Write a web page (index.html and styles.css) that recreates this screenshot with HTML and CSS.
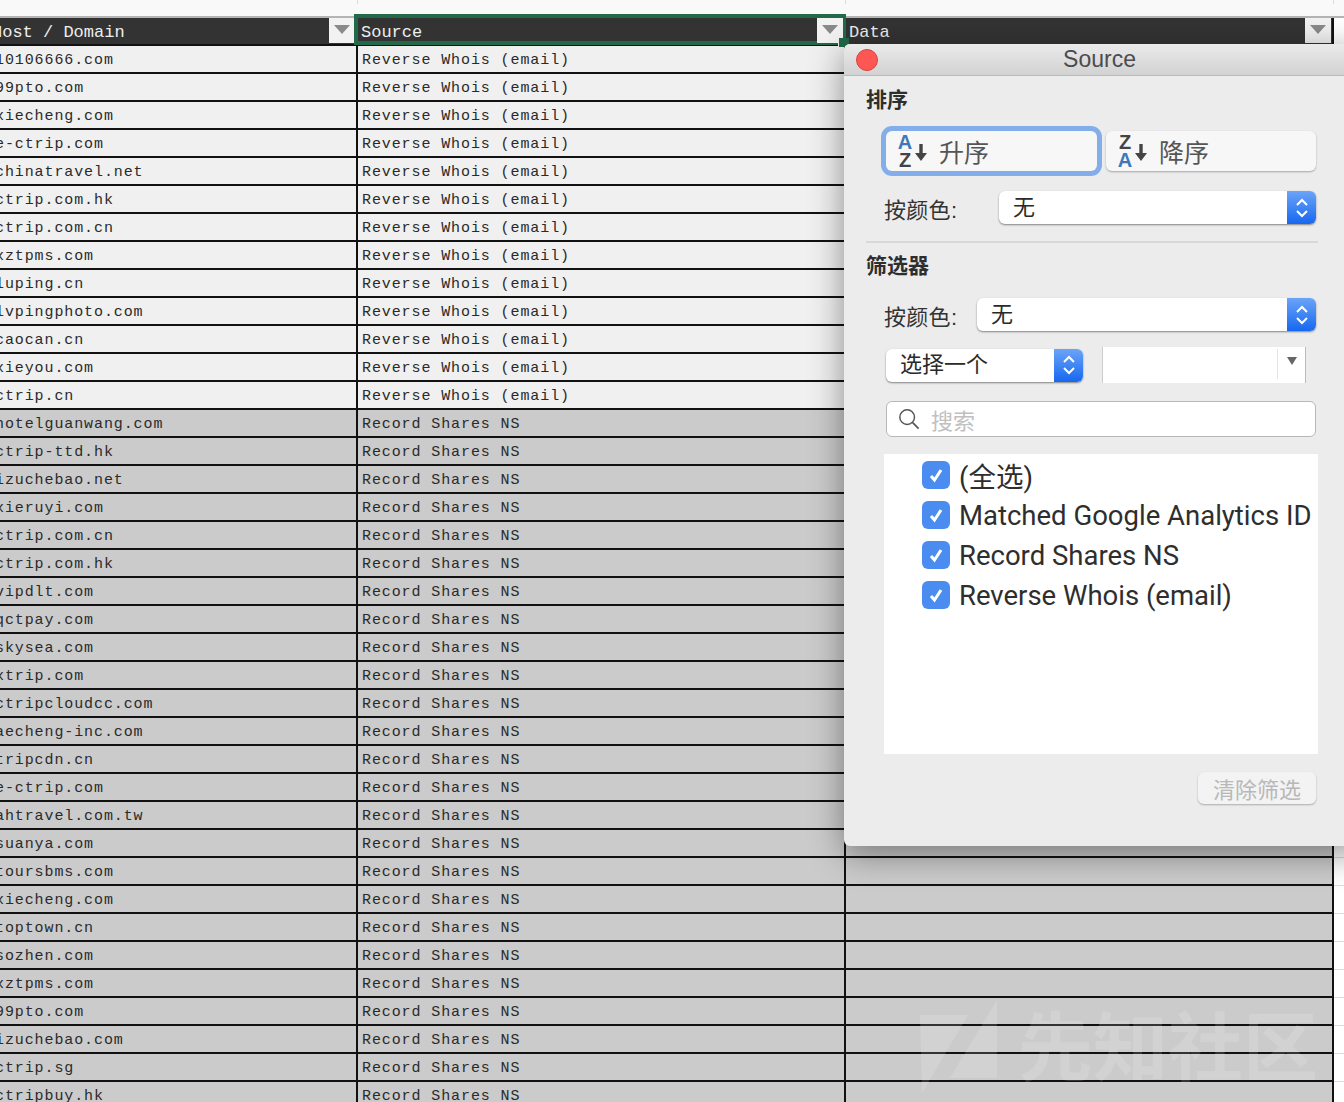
FILE: index.html
```html
<!DOCTYPE html>
<html>
<head>
    <title>Source filter</title>
    <link rel="stylesheet" href="styles.css">
</head>
<body>
    <div class="sheet">
        <div class="col-letters">
            <div class="col-letter col-a">A</div>
            <div class="col-letter col-b">B</div>
            <div class="col-letter col-c">C</div>
        </div>

        <table class="grid">
            <colgroup>
                <col class="w-a"><col class="w-b"><col class="w-c"><col class="w-d">
            </colgroup>
            <thead>
                <tr>
                    <th class="first"><div class="head-cell"><span>Host / Domain</span><span class="filter-btn"></span></div></th>
                    <th class="selected"><div class="head-cell"><span>Source</span><span class="filter-btn"></span></div><span class="fill-handle"></span></th>
                    <th><div class="head-cell"><span>Data</span><span class="filter-btn"></span></div></th>
                    <td class="blank"></td>
                </tr>
            </thead>
            <tbody>
                <tr><td class="first">10106666.com</td><td>Reverse Whois (email)</td><td></td><td class="blank"></td></tr>
                <tr><td class="first">99pto.com</td><td>Reverse Whois (email)</td><td></td><td class="blank"></td></tr>
                <tr><td class="first">xiecheng.com</td><td>Reverse Whois (email)</td><td></td><td class="blank"></td></tr>
                <tr><td class="first">e-ctrip.com</td><td>Reverse Whois (email)</td><td></td><td class="blank"></td></tr>
                <tr><td class="first">chinatravel.net</td><td>Reverse Whois (email)</td><td></td><td class="blank"></td></tr>
                <tr><td class="first">ctrip.com.hk</td><td>Reverse Whois (email)</td><td></td><td class="blank"></td></tr>
                <tr><td class="first">ctrip.com.cn</td><td>Reverse Whois (email)</td><td></td><td class="blank"></td></tr>
                <tr><td class="first">xztpms.com</td><td>Reverse Whois (email)</td><td></td><td class="blank"></td></tr>
                <tr><td class="first">luping.cn</td><td>Reverse Whois (email)</td><td></td><td class="blank"></td></tr>
                <tr><td class="first">lvpingphoto.com</td><td>Reverse Whois (email)</td><td></td><td class="blank"></td></tr>
                <tr><td class="first">caocan.cn</td><td>Reverse Whois (email)</td><td></td><td class="blank"></td></tr>
                <tr><td class="first">xieyou.com</td><td>Reverse Whois (email)</td><td></td><td class="blank"></td></tr>
                <tr><td class="first">ctrip.cn</td><td>Reverse Whois (email)</td><td></td><td class="blank"></td></tr>
                <tr class="grey"><td class="first">hotelguanwang.com</td><td>Record Shares NS</td><td></td><td class="blank"></td></tr>
                <tr class="grey"><td class="first">ctrip-ttd.hk</td><td>Record Shares NS</td><td></td><td class="blank"></td></tr>
                <tr class="grey"><td class="first">izuchebao.net</td><td>Record Shares NS</td><td></td><td class="blank"></td></tr>
                <tr class="grey"><td class="first">xieruyi.com</td><td>Record Shares NS</td><td></td><td class="blank"></td></tr>
                <tr class="grey"><td class="first">ctrip.com.cn</td><td>Record Shares NS</td><td></td><td class="blank"></td></tr>
                <tr class="grey"><td class="first">ctrip.com.hk</td><td>Record Shares NS</td><td></td><td class="blank"></td></tr>
                <tr class="grey"><td class="first">vipdlt.com</td><td>Record Shares NS</td><td></td><td class="blank"></td></tr>
                <tr class="grey"><td class="first">qctpay.com</td><td>Record Shares NS</td><td></td><td class="blank"></td></tr>
                <tr class="grey"><td class="first">skysea.com</td><td>Record Shares NS</td><td></td><td class="blank"></td></tr>
                <tr class="grey"><td class="first">xtrip.com</td><td>Record Shares NS</td><td></td><td class="blank"></td></tr>
                <tr class="grey"><td class="first">ctripcloudcc.com</td><td>Record Shares NS</td><td></td><td class="blank"></td></tr>
                <tr class="grey"><td class="first">aecheng-inc.com</td><td>Record Shares NS</td><td></td><td class="blank"></td></tr>
                <tr class="grey"><td class="first">tripcdn.cn</td><td>Record Shares NS</td><td></td><td class="blank"></td></tr>
                <tr class="grey"><td class="first">e-ctrip.com</td><td>Record Shares NS</td><td></td><td class="blank"></td></tr>
                <tr class="grey"><td class="first">ahtravel.com.tw</td><td>Record Shares NS</td><td></td><td class="blank"></td></tr>
                <tr class="grey"><td class="first">suanya.com</td><td>Record Shares NS</td><td></td><td class="blank"></td></tr>
                <tr class="grey"><td class="first">toursbms.com</td><td>Record Shares NS</td><td></td><td class="blank"></td></tr>
                <tr class="grey"><td class="first">xiecheng.com</td><td>Record Shares NS</td><td></td><td class="blank"></td></tr>
                <tr class="grey"><td class="first">toptown.cn</td><td>Record Shares NS</td><td></td><td class="blank"></td></tr>
                <tr class="grey"><td class="first">sozhen.com</td><td>Record Shares NS</td><td></td><td class="blank"></td></tr>
                <tr class="grey"><td class="first">xztpms.com</td><td>Record Shares NS</td><td></td><td class="blank"></td></tr>
                <tr class="grey"><td class="first">99pto.com</td><td>Record Shares NS</td><td></td><td class="blank"></td></tr>
                <tr class="grey"><td class="first">izuchebao.com</td><td>Record Shares NS</td><td></td><td class="blank"></td></tr>
                <tr class="grey"><td class="first">ctrip.sg</td><td>Record Shares NS</td><td></td><td class="blank"></td></tr>
                <tr class="grey"><td class="first">ctripbuy.hk</td><td>Record Shares NS</td><td></td><td class="blank"></td></tr>
            </tbody>
        </table>

        <div class="panel">
            <div class="title-bar">
                <span class="close-dot"></span>
                <span class="title">Source</span>
            </div>
            <div class="panel-body">
                <h2 class="section-title">排序</h2>
                <div class="sort-row">
                    <button class="sort-btn focused">
                        <span class="az"><b class="blue">A</b><b>Z</b></span>
                        <svg class="arrow" width="14" height="18" viewBox="0 0 14 18"><path d="M7 0v10" stroke="#444" stroke-width="3.400" fill="none"/><path d="M1 9h12l-6 8z" fill="#444"/></svg>
                        <span class="sort-label">升序</span>
                    </button>
                    <button class="sort-btn">
                        <span class="az"><b>Z</b><b class="blue">A</b></span>
                        <svg class="arrow" width="14" height="18" viewBox="0 0 14 18"><path d="M7 0v10" stroke="#444" stroke-width="3.400" fill="none"/><path d="M1 9h12l-6 8z" fill="#444"/></svg>
                        <span class="sort-label">降序</span>
                    </button>
                </div>
                <div class="color-row sort-color">
                    <span class="field-label">按颜色:</span>
                    <div class="select grow">
                        <span class="select-text">无</span>
                        <span class="stepper"><svg width="14" height="24" viewBox="0 0 14 24"><path d="M2 9l5-5 5 5M2 15l5 5 5-5" stroke="#fff" stroke-width="2" fill="none"/></svg></span>
                    </div>
                </div>
                <div class="divider"></div>
                <h2 class="section-title filter-title">筛选器</h2>
                <div class="color-row filter-color">
                    <span class="field-label">按颜色:</span>
                    <div class="select grow">
                        <span class="select-text">无</span>
                        <span class="stepper"><svg width="14" height="24" viewBox="0 0 14 24"><path d="M2 9l5-5 5 5M2 15l5 5 5-5" stroke="#fff" stroke-width="2" fill="none"/></svg></span>
                    </div>
                </div>
                <div class="condition-row">
                    <div class="select condition">
                        <span class="select-text">选择一个</span>
                        <span class="stepper"><svg width="14" height="24" viewBox="0 0 14 24"><path d="M2 9l5-5 5 5M2 15l5 5 5-5" stroke="#fff" stroke-width="2" fill="none"/></svg></span>
                    </div>
                    <div class="combo"><span class="combo-arrow"></span></div>
                </div>
                <div class="search">
                    <svg width="22" height="22" viewBox="0 0 24 24"><circle cx="10" cy="10" r="8" stroke="#555" stroke-width="1.600" fill="none"/><path d="M16 16l6.500 6.500" stroke="#555" stroke-width="1.800" fill="none"/></svg>
                    <span class="search-text">搜索</span>
                </div>
                <ul class="check-list">
                    <li><span class="check"><svg width="18" height="18" viewBox="0 0 18 18"><path d="M4 10l3.500 4L14 4" stroke="#fff" stroke-width="3" fill="none"/></svg></span>(全选)</li>
                    <li><span class="check"><svg width="18" height="18" viewBox="0 0 18 18"><path d="M4 10l3.500 4L14 4" stroke="#fff" stroke-width="3" fill="none"/></svg></span>Matched Google Analytics ID</li>
                    <li><span class="check"><svg width="18" height="18" viewBox="0 0 18 18"><path d="M4 10l3.500 4L14 4" stroke="#fff" stroke-width="3" fill="none"/></svg></span>Record Shares NS</li>
                    <li><span class="check"><svg width="18" height="18" viewBox="0 0 18 18"><path d="M4 10l3.500 4L14 4" stroke="#fff" stroke-width="3" fill="none"/></svg></span>Reverse Whois (email)</li>
                </ul>
                <div class="clear-row"><button class="clear-btn">清除筛选</button></div>
            </div>
        </div>

        <div class="watermark">
            <svg class="wm-logo" width="78" height="94" viewBox="0 0 78 94"><path d="M0 15h48L2 93zM77 0v78H30z" fill="#fff"/></svg>
            <span class="wm-text">先知社区</span>
        </div>
    </div>
</body>
</html>
```

FILE: styles.css
```css
* {
    box-sizing: border-box;
}

body {
    margin: 0;
    background-color: #fff;
    font-family: "Liberation Sans", "Noto Sans CJK SC", sans-serif;
}

.sheet {
    position: relative;
    width: 1344px;
    height: 1102px;
    overflow: hidden;
}

/* column letters, cut off by the top of the window */
.col-letters {
    display: grid;
    grid-template-columns: 358px 488px 488px 10px;
    height: 16px;
    overflow: hidden;
    background-color: #f9f9f9;
}

.col-letter {
    height: 16px;
    margin-top: -12px;
    border-right: 1px solid #ddd;
    font-family: "Liberation Mono", monospace;
    font-size: 15px;
    line-height: 16px;
    text-align: center;
    color: #777;
}

.col-a { padding-right: 12px; }
.col-b { color: #1f7a4c; }

/* the sheet */
.grid {
    table-layout: fixed;
    width: 1344px;
    border-collapse: separate;
    border-spacing: 0;
    border-top: 2px solid #b4b4b4;
    font-family: "Liberation Mono", monospace;
    font-size: 15px;
    letter-spacing: 0.9px;
}

.w-a { width: 358px; }
.w-b { width: 488px; }
.w-c { width: 488px; }
.w-d { width: 10px; }

.grid th,
.grid td {
    height: 28px;
    padding: 3px 0 0 4px;
    border-right: 2px solid #111;
    border-bottom: 2px solid #111;
    white-space: nowrap;
    overflow: hidden;
    text-align: left;
    font-weight: normal;
    line-height: 22px;
    color: #2a2a2a;
    background-color: #f0f0f0;
}

.grid tr.grey td {
    background-color: #cbcbcb;
}

.grid td.first,
.grid th.first {
    padding-left: 0;
    text-indent: -5px;
}

.grid td.blank {
    padding: 0;
    border-right: none;
    border-bottom: 1px solid #dcdcdc;
    background-color: #fff !important;
}

.grid th {
    position: relative;
    padding: 0 1px 0 3px;
    font-size: 17px;
    letter-spacing: 0;
    color: #eee;
    background-color: #333;
    overflow: visible;
}

.grid th.first {
    padding-left: 0;
    text-indent: -8px;
}

.head-cell {
    display: flex;
    justify-content: space-between;
    align-items: flex-start;
    height: 26px;
    overflow: hidden;
    line-height: 30px;
}

.filter-btn {
    position: relative;
    flex: none;
    width: 26px;
    height: 25px;
    background-color: #f2f2f2;
    text-indent: 0;
}

.filter-btn::after {
    content: "";
    position: absolute;
    left: 5px;
    top: 7px;
    border-left: 8px solid transparent;
    border-right: 8px solid transparent;
    border-top: 9px solid #8a8a8a;
}

/* green selection box round the Source header */
.grid th.selected {
    z-index: 2;
}

.grid th.selected::before {
    content: "";
    position: absolute;
    left: -4px;
    top: -4px;
    right: -2px;
    bottom: -1px;
    border: 4px solid #22694a;
    pointer-events: none;
}

.fill-handle {
    position: absolute;
    right: -5px;
    bottom: -3px;
    width: 11px;
    height: 9px;
    border-left: 1px solid #f2f2f2;
    background-color: #22694a;
}

/* filter panel lying over the sheet */
.panel {
    position: absolute;
    left: 844px;
    top: 44px;
    width: 520px;
    height: 802px;
    border-radius: 6px;
    background-color: #ececec;
    box-shadow: 0 8px 34px rgba(0, 0, 0, 0.42);
    z-index: 3;
}

.title-bar {
    display: flex;
    align-items: center;
    justify-content: center;
    position: relative;
    height: 32px;
    width: 500px;
    border-radius: 6px 0 0 0;
    border-bottom: 1px solid #b9b9b9;
    background: linear-gradient(#eaeaea, #d2d2d2);
}

.close-dot {
    position: absolute;
    left: 12px;
    top: 5px;
    width: 22px;
    height: 22px;
    border-radius: 50%;
    border: 1px solid #d8443f;
    background-color: #fc5753;
}

.title {
    margin-left: 11px;
    font-size: 23px;
    color: #4c4c4c;
}

.panel-body {
    width: 500px;
    padding: 0 28px 0 22px;
}

.section-title {
    margin: 0;
    font-size: 21px;
    font-weight: bold;
    line-height: 30px;
    color: #2e2e2e;
}

.panel-body > .section-title:first-child {
    margin-top: 9px;
}

.sort-row {
    display: flex;
    gap: 9px;
    margin: 16px 0 0 20px;
}

.sort-btn {
    display: flex;
    align-items: center;
    height: 40px;
    width: 210px;
    padding: 0 0 0 10px;
    border: none;
    border-radius: 6px;
    background-color: #f7f7f7;
    box-shadow: 0 1px 2px rgba(0, 0, 0, 0.3);
    font-family: inherit;
}

.sort-btn.focused {
    width: 211px;
    box-shadow: 0 0 0 5px #83aeea;
}

.az {
    display: flex;
    flex-direction: column;
    width: 18px;
    font-size: 20px;
    line-height: 18px;
    color: #444;
}

.az b.blue {
    color: #3e78b8;
}

.arrow {
    margin: 4px 0 0 0;
}

.sort-label {
    margin-left: 11px;
    font-size: 25px;
    color: #555;
}

.color-row {
    display: flex;
    align-items: center;
    margin-left: 18px;
}

.sort-color {
    margin-top: 20px;
}

.field-label {
    width: 93px;
    flex: none;
    font-size: 22px;
    letter-spacing: 0.3px;
    color: #333;
}

.select {
    display: flex;
    align-items: center;
    justify-content: space-between;
    height: 33px;
    border-radius: 6px;
    background-color: #fff;
    box-shadow: 0 1px 2px rgba(0, 0, 0, 0.45);
}

.grow {
    flex: 1;
}

.sort-color .grow {
    margin-left: 22px;
}

.select-text {
    padding-left: 14px;
    font-size: 22px;
    line-height: 30px;
    color: #2a2a2a;
}

.stepper {
    display: flex;
    align-items: center;
    justify-content: center;
    flex: none;
    width: 29px;
    height: 33px;
    border-radius: 0 6px 6px 0;
    background: linear-gradient(#6ba4f8, #1668f0);
}

.divider {
    height: 2px;
    margin: 17px -2px 0 0;
    background-color: #d8d8d8;
}

.filter-title {
    margin-top: 8px;
}

.filter-color {
    margin-top: 17px;
}

.condition-row {
    display: flex;
    align-items: center;
    gap: 19px;
    margin: 16px 0 0 20px;
}

.condition {
    width: 197px;
}

.combo {
    position: relative;
    width: 204px;
    height: 36px;
    border-left: 1px solid #ccc;
    border-right: 1px solid #bbb;
    background-color: #fff;
}

.combo-arrow {
    position: absolute;
    right: 0;
    top: 2px;
    width: 28px;
    height: 30px;
    border-left: 1px solid #e4e4e4;
}

.combo-arrow::after {
    content: "";
    position: absolute;
    left: 9px;
    top: 8px;
    border-left: 5px solid transparent;
    border-right: 5px solid transparent;
    border-top: 8px solid #666;
}

.search {
    display: flex;
    align-items: center;
    gap: 11px;
    height: 36px;
    margin: 18px 0 0 20px;
    padding-left: 11px;
    border: 1px solid #b8b8b8;
    border-radius: 6px;
    background-color: #fff;
}

.search-text {
    font-size: 22px;
    color: #c0c0c0;
}

.check-list {
    list-style: none;
    height: 300px;
    margin: 17px -2px 0 18px;
    padding: 1px 0 0 38px;
    background-color: #fff;
}

.check-list li {
    display: flex;
    align-items: center;
    gap: 9px;
    height: 40px;
    font-family: Roboto, "Noto Sans CJK SC", sans-serif;
    font-size: 27.500px;
    white-space: nowrap;
    color: #2e2e2e;
}

.check {
    display: flex;
    align-items: center;
    justify-content: center;
    flex: none;
    width: 28px;
    height: 28px;
    border-radius: 6px;
    background-color: #4a8cf0;
}

.clear-row {
    display: flex;
    justify-content: flex-end;
    margin-top: 18px;
}

.clear-btn {
    width: 118px;
    height: 32px;
    padding: 0;
    border: none;
    border-radius: 6px;
    background-color: #f3f3f3;
    box-shadow: 0 1px 2px rgba(0, 0, 0, 0.28);
    font-family: inherit;
    font-size: 22px;
    color: #b8b8b8;
}

/* site watermark on top of everything */
.watermark {
    position: absolute;
    left: 920px;
    top: 1000px;
    display: flex;
    align-items: flex-start;
    gap: 20px;
    opacity: 0.14;
    z-index: 4;
}

.wm-text {
    margin-top: 2px;
    font-size: 75px;
    font-weight: bold;
    line-height: 94px;
    white-space: nowrap;
    color: #fff;
}
```
